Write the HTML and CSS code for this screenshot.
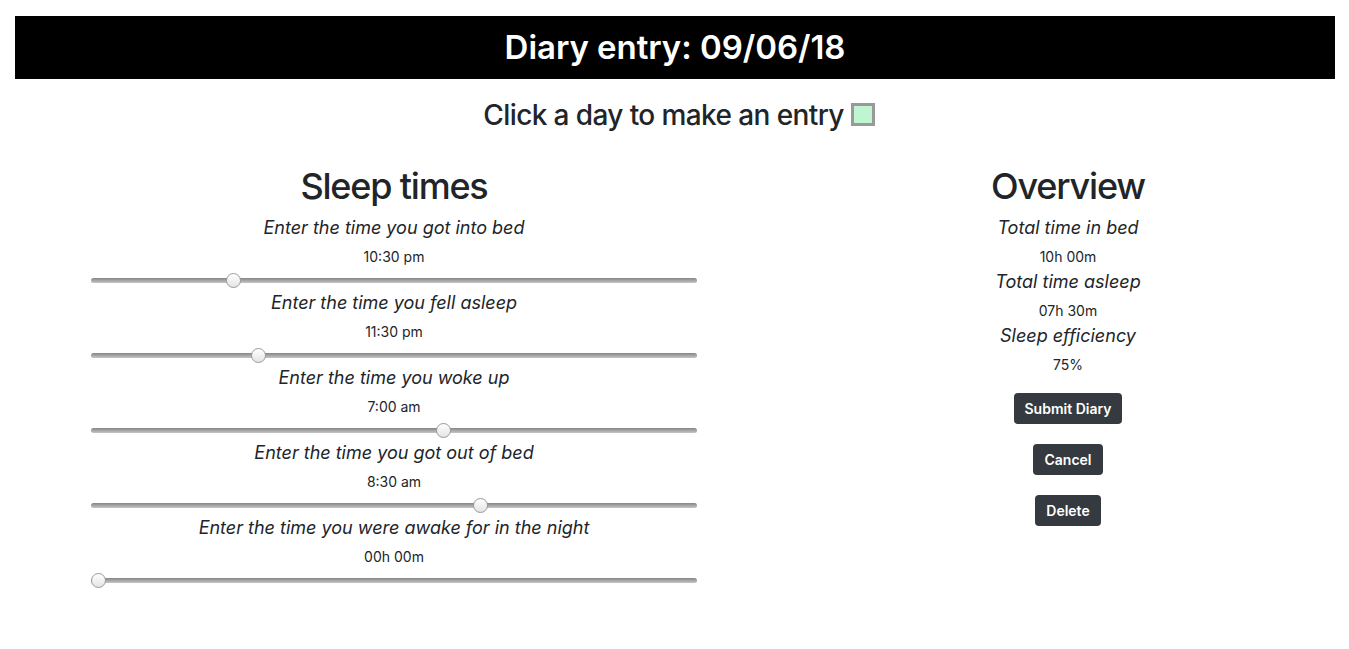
FILE: index.html
```html
<!DOCTYPE html>
<html>
<head>
<meta charset="utf-8">
<link rel="stylesheet" href="styles.css">
</head>
<body>
<header class="banner">Diary entry: 09/06/18</header>
<div class="prompt">Click a day to make an entry <span class="swatch"></span></div>
<main class="columns">
  <section class="sleep">
    <h1 class="heading">Sleep times</h1>
    <div class="field">
      <div class="label">Enter the time you got into bed</div>
      <div class="value">10:30 pm</div>
      <input class="slider" type="range" min="0" max="1440" value="330">
    </div>
    <div class="field">
      <div class="label">Enter the time you fell asleep</div>
      <div class="value">11:30 pm</div>
      <input class="slider" type="range" min="0" max="1440" value="390">
    </div>
    <div class="field">
      <div class="label">Enter the time you woke up</div>
      <div class="value">7:00 am</div>
      <input class="slider" type="range" min="0" max="1440" value="840">
    </div>
    <div class="field">
      <div class="label">Enter the time you got out of bed</div>
      <div class="value">8:30 am</div>
      <input class="slider" type="range" min="0" max="1440" value="930">
    </div>
    <div class="field">
      <div class="label">Enter the time you were awake for in the night</div>
      <div class="value">00h 00m</div>
      <input class="slider" type="range" min="0" max="1440" value="0">
    </div>
  </section>
  <section class="overview">
    <h1 class="heading">Overview</h1>
    <div class="stat">
      <div class="label">Total time in bed</div>
      <div class="value">10h 00m</div>
    </div>
    <div class="stat">
      <div class="label">Total time asleep</div>
      <div class="value">07h 30m</div>
    </div>
    <div class="stat">
      <div class="label">Sleep efficiency</div>
      <div class="value">75%</div>
    </div>
    <div class="actions">
      <button class="btn">Submit Diary</button>
      <button class="btn">Cancel</button>
      <button class="btn">Delete</button>
    </div>
  </section>
</main>
</body>
</html>
```
FILE: styles.css
```css
* { box-sizing: border-box; }
body {
  margin: 16px 14px 0 15px;
  font-family: Inter, "Liberation Sans", sans-serif;
  color: #212529;
  background: #fff;
}
.banner {
  background: #000;
  color: #fff;
  height: 63px;
  line-height: 63px;
  text-align: center;
  font-size: 33px;
  font-weight: 600;
  letter-spacing: -0.05px;
}
.prompt {
  margin-top: 19px;
  padding-left: 8px;
  text-align: center;
  font-size: 28px;
  line-height: 34px;
  font-weight: 500;
  letter-spacing: -0.6px;
}
.swatch {
  display: inline-block;
  width: 24px;
  height: 23px;
  background: #c0f5d2;
  border: 3px solid #999;
  vertical-align: -1px;
}
.columns {
  display: flex;
  margin-top: 33px;
  padding-left: 76px;
}
.sleep {
  width: 606px;
  display: flex;
  flex-direction: column;
  align-items: center;
}
.overview {
  width: 300px;
  margin-left: 221px;
  display: flex;
  flex-direction: column;
  align-items: center;
}
.heading {
  margin: 0;
  font-size: 36px;
  line-height: 43px;
  font-weight: 500;
  letter-spacing: -1.2px;
}
.field {
  width: 100%;
  display: flex;
  flex-direction: column;
  align-items: center;
  margin-bottom: 4px;
}
.field:first-of-type { margin-top: 9px; }
.label {
  font-size: 18px;
  line-height: 22px;
  font-style: italic;
}
.value {
  margin-top: 8px;
  font-size: 14px;
  line-height: 20px;
}
.slider {
  -webkit-appearance: none;
  appearance: none;
  margin: 5px 0 0;
  width: 606px;
  height: 16px;
  background: transparent;
}
.slider::-webkit-slider-runnable-track {
  height: 5px;
  border-radius: 3px;
  background: linear-gradient(#858585, #c6c6c6);
}
.slider::-webkit-slider-thumb {
  -webkit-appearance: none;
  width: 15px;
  height: 15px;
  margin-top: -5px;
  border-radius: 50%;
  border: 1px solid #9a9a9a;
  background: linear-gradient(#ffffff, #e4e4e4);
}
.stat {
  display: flex;
  flex-direction: column;
  align-items: center;
  margin-bottom: 4px;
}
.stat:first-of-type { margin-top: 9px; }
.actions {
  margin-top: 14px;
  display: flex;
  flex-direction: column;
  align-items: center;
  gap: 20px;
}
.btn {
  background: #343a40;
  color: #fff;
  border: none;
  border-radius: 4px;
  height: 31px;
  padding: 0 11px;
  font-family: inherit;
  font-size: 14px;
  font-weight: 600;
}
```
